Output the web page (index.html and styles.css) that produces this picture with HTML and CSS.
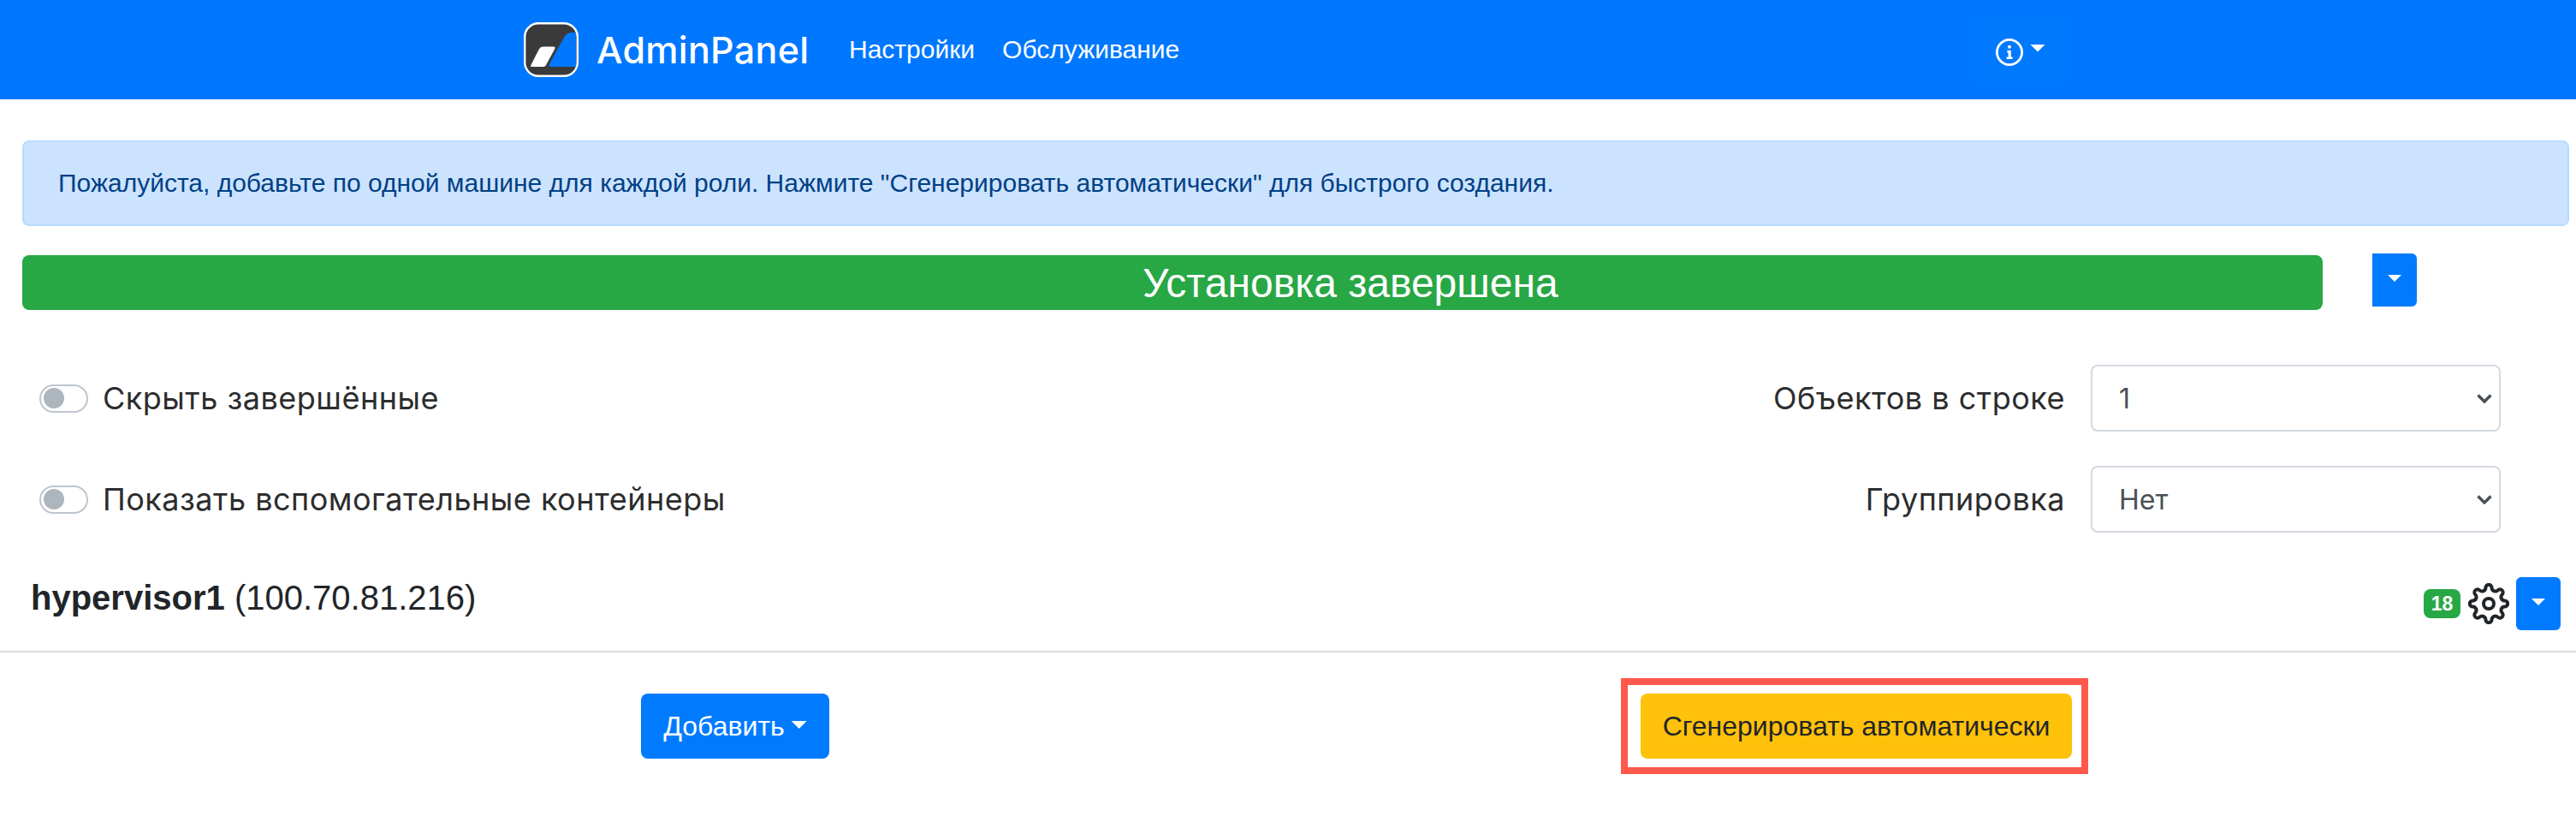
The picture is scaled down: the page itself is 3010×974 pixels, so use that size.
FILE: index.html
```
<!DOCTYPE html>
<html lang="ru">
<head>
  <meta charset="UTF-8" />
  <meta name="viewport" content="width=device-width, initial-scale=1.0"/>
  <title>AdminPanel</title>
  <link rel="stylesheet" href="styles.css">
</head>
<body>
  <header class="navbar">
    <a class="brand" href="#">
      <svg class="brand-logo" viewBox="0 0 64 64">
        <rect x="1.5" y="1.5" width="61" height="61" rx="16" fill="#3a3a3a"/>
        <path d="M61 12H57C52 12 49 14 47 18L30.5 47.5C29 50.5 29.5 52 32 52H61Z" fill="#0077ff"/>
        <path d="M23 28.5H35C36.5 28.5 37 29.5 36.3 31L26 50C25.3 51.3 24.5 52 23 52H9C8 52 7.8 51.3 8.3 50.3L17.5 32C18.8 29.5 20.5 28.5 23 28.5Z" fill="#fff"/>
        <rect x="1.2" y="1.2" width="61.6" height="61.6" rx="16" fill="none" stroke="#fff" stroke-width="2.4"/>
      </svg>
      <span class="brand-name">AdminPanel</span>
    </a>
    <nav class="nav-links">
      <a href="#">Настройки</a>
      <a href="#">Обслуживание</a>
    </nav>
    <button class="info-btn">
      <svg class="info-icon" viewBox="0 0 16 16">
        <circle cx="8" cy="8" r="7.3" fill="none" stroke="#fff" stroke-width="1.4"/>
        <circle cx="8" cy="4.9" r="1" fill="#fff"/>
        <path d="M6.7 6.9H8.9V10.7H9.8V12H6.3V10.7H7.3V8.2H6.7Z" fill="#fff"/>
      </svg>
      <span class="caret"></span>
    </button>
  </header>

  <main>
    <div class="alert">Пожалуйста, добавьте по одной машине для каждой роли. Нажмите "Сгенерировать автоматически" для быстрого создания.</div>

    <section class="status">
      <div class="progress">Установка завершена</div>
      <button class="drop-btn drop-btn-joined"><span class="caret caret-sm"></span></button>
    </section>

    <section class="filters">
      <div class="filter-row">
        <label class="switch-label"><i class="switch"></i>Скрыть завершённые</label>
        <label>Объектов в строке</label>
        <div class="select">1
          <svg class="chevron" viewBox="0 0 18 11"><path d="M1.5 1.5L9 9L16.5 1.5"/></svg>
        </div>
      </div>
      <div class="filter-row">
        <label class="switch-label"><i class="switch"></i>Показать вспомогательные контейнеры</label>
        <label>Группировка</label>
        <div class="select">Нет
          <svg class="chevron" viewBox="0 0 18 11"><path d="M1.5 1.5L9 9L16.5 1.5"/></svg>
        </div>
      </div>
    </section>

    <section class="host">
      <h2><b>hypervisor1</b> (100.70.81.216)</h2>
      <div class="host-tools">
        <span class="badge">18</span>
        <svg class="gear" viewBox="-24 -24 48 48">
          <path d="M-3.6 -18.56A3.6 3.6 0 0 1 3.6 -18.56A4.1 4.1 0 0 0 10.58 -15.67A3.6 3.6 0 0 1 15.67 -10.58A4.1 4.1 0 0 0 18.56 -3.6A3.6 3.6 0 0 1 18.56 3.6A4.1 4.1 0 0 0 15.67 10.58A3.6 3.6 0 0 1 10.58 15.67A4.1 4.1 0 0 0 3.6 18.56A3.6 3.6 0 0 1 -3.6 18.56A4.1 4.1 0 0 0 -10.58 15.67A3.6 3.6 0 0 1 -15.67 10.58A4.1 4.1 0 0 0 -18.56 3.6A3.6 3.6 0 0 1 -18.56 -3.6A4.1 4.1 0 0 0 -15.67 -10.58A3.6 3.6 0 0 1 -10.58 -15.67A4.1 4.1 0 0 0 -3.6 -18.56Z"/>
          <circle r="6"/>
        </svg>
        <button class="drop-btn"><span class="caret caret-sm"></span></button>
      </div>
    </section>

    <section class="actions">
      <button class="btn btn-primary">Добавить<span class="caret"></span></button>
      <div class="highlight">
        <button class="btn btn-warning">Сгенерировать автоматически</button>
      </div>
    </section>
  </main>
</body>
</html>
```
FILE: styles.css
```
* {
  box-sizing: border-box;
}
body {
  margin: 0;
  font-family: "Liberation Sans", Arial, sans-serif;
  font-size: 32px;
  color: #212529;
  background: #fff;
}
button {
  border: none;
  padding: 0;
  font: inherit;
  cursor: pointer;
}
a {
  color: #fff;
  text-decoration: none;
}

/* top bar */
.navbar {
  display: flex;
  align-items: center;
  height: 116px;
  padding: 0 593px 0 612px;
  background: #0077ff;
}
.brand {
  display: flex;
  align-items: center;
  width: 380px;
}
.brand-logo {
  width: 64px;
  height: 64px;
}
.brand-name {
  margin-left: 21px;
  font-family: Inter, sans-serif;
  font-size: 43px;
  font-weight: 550;
  letter-spacing: 0.3px;
}
.nav-links {
  display: flex;
  gap: 32px;
  font-size: 30px;
}
.info-btn {
  display: flex;
  align-items: center;
  gap: 8px;
  width: 112px;
  height: 78px;
  margin-left: auto;
  padding: 5px 0 0 27px;
  border-radius: 8px;
  background: #0079ff;
}
.info-icon {
  width: 32px;
  height: 32px;
}
.caret {
  width: 18px;
  height: 9px;
  background: #fff;
  clip-path: polygon(0 0, 100% 0, 50% 100%);
}
.info-btn .caret {
  margin-bottom: 9px;
}
.caret-sm {
  width: 16px;
  height: 8px;
}

/* message and progress */
.alert {
  display: flex;
  align-items: center;
  height: 100px;
  margin: 48px 8px 0 26px;
  padding-left: 40px;
  border: 2px solid #b8daff;
  border-radius: 8px;
  font-size: 30px;
  color: #004085;
  background: #cce3ff;
}
.status {
  display: flex;
  margin: 32px 0 0 26px;
}
.progress {
  display: flex;
  align-items: center;
  width: 2688px;
  height: 64px;
  margin-top: 2px;
  padding-left: 1309px;
  border-radius: 8px;
  font-size: 48px;
  color: #fff;
  background: #28a745;
}
.drop-btn {
  display: flex;
  justify-content: center;
  width: 52px;
  height: 62px;
  padding-top: 25px;
  border-radius: 6px;
  background: #007bff;
}
.drop-btn-joined {
  margin-left: 58px;
  border-radius: 0 6px 6px 0;
}

/* filters */
.filters {
  display: flex;
  flex-direction: column;
  gap: 40px;
  padding: 64px 88px 0 46px;
  font-family: Inter, sans-serif;
  font-size: 36px;
  letter-spacing: 0.5px;
  color: #2c2d2e;
}
.filter-row {
  display: flex;
  align-items: center;
  height: 78px;
}
.switch-label {
  display: flex;
  align-items: center;
  gap: 17px;
  flex: 1;
}
.switch {
  display: flex;
  align-items: center;
  width: 57px;
  height: 33px;
  padding-left: 3px;
  border: 2px solid #bfc6cd;
  border-radius: 17px;
}
.switch::before {
  content: '';
  width: 24px;
  height: 24px;
  border-radius: 50%;
  background: #adb5bd;
}
.select {
  display: flex;
  align-items: center;
  justify-content: space-between;
  width: 479px;
  height: 78px;
  margin-left: 30px;
  padding: 0 8px 0 31px;
  border: 2px solid #d3d9df;
  border-radius: 8px;
  font-size: 32px;
  letter-spacing: 0;
  color: #495057;
}
.chevron {
  width: 18px;
  height: 11px;
  fill: none;
  stroke: #495057;
  stroke-width: 3.5;
}

/* host row */
.host {
  display: flex;
  justify-content: space-between;
  height: 140px;
  padding: 52px 18px 0 36px;
  border-bottom: 2px solid #dedede;
}
.host h2 {
  margin: 0;
  font-size: 40px;
  font-weight: 400;
  line-height: 48px;
}
.host-tools {
  display: flex;
  align-items: center;
  height: 62px;
}
.badge {
  width: 43px;
  height: 34px;
  border-radius: 8px;
  font-size: 23px;
  font-weight: 700;
  line-height: 34px;
  text-align: center;
  color: #fff;
  background: #28a745;
}
.gear {
  width: 48px;
  height: 48px;
  margin: 0 8px 0 9px;
  fill: none;
  stroke: #212529;
  stroke-width: 4;
}

/* buttons */
.actions {
  display: flex;
  align-items: center;
  justify-content: space-between;
  padding: 30px 570px 0 749px;
}
.btn {
  display: flex;
  align-items: center;
  justify-content: center;
  height: 76px;
  border-radius: 8px;
}
.btn-primary {
  gap: 8px;
  width: 220px;
  color: #fff;
  background: #007bff;
}
.btn-primary .caret {
  margin-bottom: 3px;
}
.btn-warning {
  width: 504px;
  color: #212529;
  background: #ffc10a;
}
.highlight {
  padding: 10px 11px 10px 15px;
  border: 8px solid #ff584c;
}
```
